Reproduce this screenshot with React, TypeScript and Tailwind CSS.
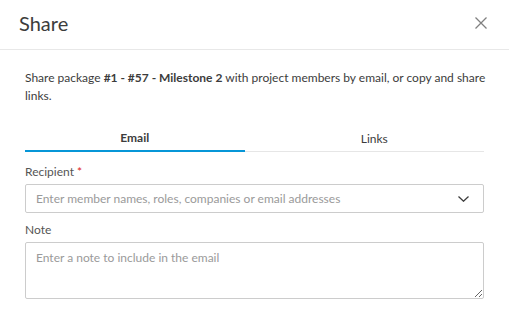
import React from 'react';

export default function App() {
  return (
    <div className="w-[509px] h-[319px] bg-white text-[#3c3c3c] font-['Lato','Noto_Sans',sans-serif]">
      <div className="flex items-center justify-between h-[50px] pl-[19px] pr-[22px] border-b border-[#e8e8e8]">
        <h1 className="text-[20px] leading-none font-normal text-[#3c3c3c] -mt-[4px]">Share</h1>
        <button className="text-[#808080] -mt-[4px]" aria-label="Close">
          <svg width="12" height="12" viewBox="0 0 12 12" fill="none" stroke="currentColor" strokeWidth="1.3">
            <path d="M0.5 0.5L11.5 11.5M11.5 0.5L0.5 11.5" />
          </svg>
        </button>
      </div>

      <div className="px-[25px] pt-[19px]">
        <p className="text-[12px] leading-[18px] text-[#3c3c3c] -mr-[6px]">
          Share package <span className="font-bold">#1 - #57 - Milestone 2</span> with project members by email, or copy and share
          <br />
          links.
        </p>

        <div className="flex mt-[17px] border-b border-[#e6e6e6]">
          <button className="w-[220px] h-[30px] pt-[4px] text-[12px] font-bold text-[#3c3c3c] border-b-2 border-[#0696d7] -mb-px">
            Email
          </button>
          <button className="w-[220px] ml-[20px] h-[29px] pt-[4px] text-[12px] text-[#3c3c3c]">Links</button>
        </div>

        <label className="block mt-[11px] text-[12px] leading-[18px] text-[#555]">
          Recipient <span className="text-[#dd2222]">*</span>
        </label>
        <div className="flex items-center justify-between h-[29px] mt-[3px] pl-[10px] pr-[14px] border border-[#cccccc] rounded-[2px]">
          <span className="text-[12px] text-[#9a9a9a]">Enter member names, roles, companies or email addresses</span>
          <svg width="11" height="6" viewBox="0 0 11 6" fill="none" stroke="#3c3c3c" strokeWidth="1.3">
            <path d="M0.5 0.5L5.5 5.2L10.5 0.5" />
          </svg>
        </div>

        <label className="block mt-[8px] text-[12px] leading-[18px] text-[#555]">Note</label>
        <textarea
          className="block w-full h-[57px] mt-[3px] px-[10px] py-[6px] text-[12px] border border-[#cccccc] rounded-[2px] placeholder:text-[#9a9a9a] outline-none resize-y"
          placeholder="Enter a note to include in the email"
        />
      </div>
    </div>
  );
}
